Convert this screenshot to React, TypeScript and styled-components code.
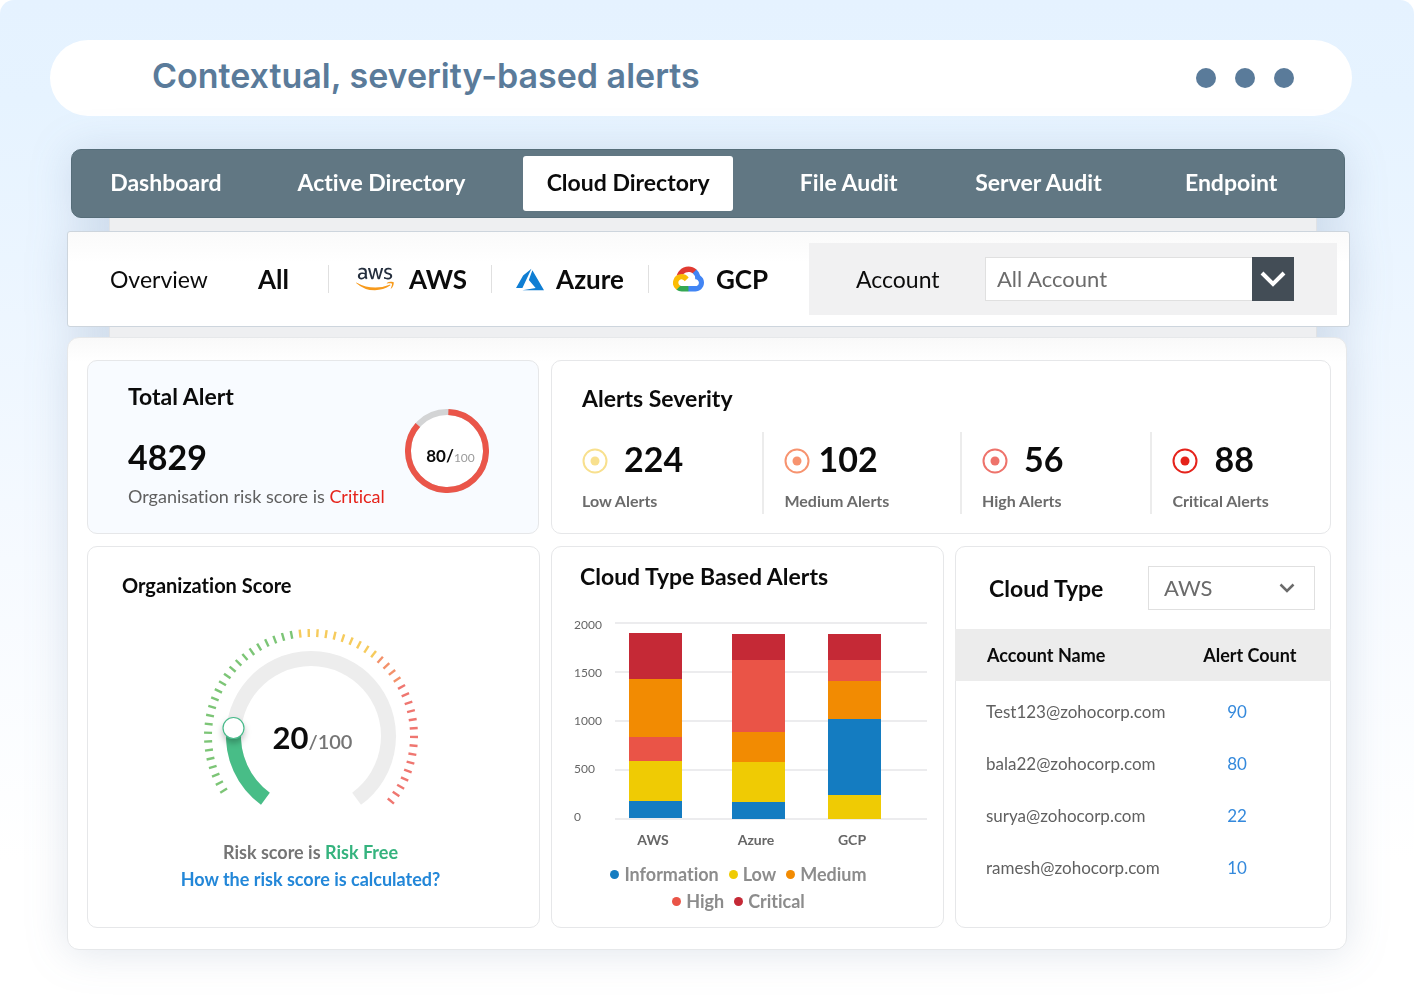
import React from "react";
import styled, { createGlobalStyle } from "styled-components";
import { FaAws } from "react-icons/fa";

const GlobalStyle = createGlobalStyle`
  *, *::before, *::after { box-sizing: border-box; }
  body {
    margin: 0;
    background: #ffffff;
    color: #0b0b0b;
    font-family: Lato, "Liberation Sans", sans-serif;
    font-variant-ligatures: none;
  }
  h1, h2, p { margin: 0; }
  button, select { font-family: inherit; font-variant-ligatures: none; }
`;

const Page = styled.main`
  padding: 40px 62px 54px 50px;
  border-radius: 14px 14px 0 0;
  background: linear-gradient(180deg, #e5f2ff 0, #e6f3ff 100px, #ebf5ff 260px, #f6faff 560px, #ffffff 860px) no-repeat;
`;

const TitleBar = styled.header`
  display: flex;
  align-items: center;
  justify-content: space-between;
  height: 76px;
  padding: 0 58px 0 102px;
  border-radius: 38px;
  background: #ffffff;
`;

const Title = styled.h1`
  padding-bottom: 4px;
  color: #5a7b9a;
  font: 600 34px/44px Inter, "Liberation Sans", sans-serif;
`;

const Dots = styled.div`
  display: flex;
  gap: 19px;
`;

const Dot = styled.span`
  width: 20px;
  height: 20px;
  border-radius: 50%;
  background: #5a7b9a;
`;

const Console = styled.div`
  margin: 33px 2px 0 17px;
  filter: drop-shadow(0 2px 20px rgba(70, 100, 145, 0.17));
`;

const Nav = styled.nav`
  display: grid;
  grid-template-columns: 188fr 244fr 250fr 192fr 188fr 198fr;
  align-items: center;
  justify-items: center;
  height: 69px;
  margin: 0 5px 0 4px;
  padding-right: 14px;
  border: 1px solid #566d79;
  border-radius: 10px;
  background: #617783;
`;

const NavTab = styled.button<{ $active?: boolean }>`
  width: calc(100% - 40px);
  height: 55px;
  padding: 0 0 3px;
  border: 0;
  border-radius: 3px;
  background: ${(p) => (p.$active ? "#ffffff" : "transparent")};
  color: ${(p) => (p.$active ? "#0b0b0b" : "#ffffff")};
  font-size: 23px;
  font-weight: 700;
  line-height: 28px;
  white-space: nowrap;
`;

const Connector = styled.div<{ $height: number }>`
  height: ${(p) => p.$height}px;
  margin: 0 33px 0 42px;
  border: solid #e0e2e5;
  border-width: 0 1px;
  background: #eeeff1;
`;

const Toolbar = styled.section`
  display: flex;
  align-items: center;
  height: 96px;
  padding: 0 12px 0 42px;
  border: 1px solid #cdd5dd;
  border-radius: 3px;
  background: linear-gradient(180deg, #fafafa 0, #ffffff 30px);
`;

const ToolbarTitle = styled.h2`
  margin-right: 26px;
  font-size: 23px;
  font-weight: 400;
  line-height: 32px;
`;

const Provider = styled.button`
  display: flex;
  align-items: center;
  gap: 12px;
  height: 32px;
  padding: 0 24px;
  border: 0;
  background: none;
  color: #0b0b0b;
  font-size: 26px;
  font-weight: 700;
  line-height: 32px;
`;

const Divider = styled.span`
  flex: none;
  width: 1px;
  height: 28px;
  background: #e0e0e0;
`;

const Spacer = styled.span`
  width: 15px;
`;

const AwsMark = styled(FaAws)`
  width: 38px;
  height: 30px;
  margin: 0 3px;
  path { fill: url(#aws-fill); }
`;

const AccountBox = styled.div`
  display: flex;
  flex: 0 1 528px;
  align-items: center;
  justify-content: space-between;
  height: 72px;
  margin-left: auto;
  padding: 0 43px 0 47px;
  background: #f1f1f2;
`;

const FieldLabel = styled.label<{ $strong?: boolean }>`
  font-size: 23px;
  font-weight: ${(p) => (p.$strong ? 700 : 400)};
  line-height: 32px;
`;

const SelectWrap = styled.div<{ $width: number }>`
  position: relative;
  width: ${(p) => p.$width}px;
`;

const Select = styled.select<{ $inset: number }>`
  display: block;
  width: 100%;
  height: 44px;
  padding: 0 44px 2px ${(p) => p.$inset}px;
  appearance: none;
  border: 1px solid #e0e0e0;
  border-radius: 0;
  background: #ffffff;
  color: #6b6b6b;
  font-size: 22px;
`;

const SelectArrow = styled.span<{ $filled?: boolean }>`
  position: absolute;
  inset: 0 0 0 auto;
  display: flex;
  align-items: center;
  justify-content: center;
  width: ${(p) => (p.$filled ? 42 : 56)}px;
  background: ${(p) => (p.$filled ? "#434d56" : "none")};
  pointer-events: none;
`;

const Panel = styled.section`
  display: flex;
  flex-direction: column;
  gap: 12px;
  margin-right: 3px;
  padding: 22px 15px 21px 19px;
  border: 1px solid #e6e8ea;
  border-radius: 12px;
  background: linear-gradient(180deg, #f9f9f9 0, #ffffff 24px);
`;

const Row = styled.div<{ $columns: string; $gap: number }>`
  display: grid;
  grid-template-columns: ${(p) => p.$columns};
  gap: ${(p) => p.$gap}px;
`;

const Card = styled.article<{ $tinted?: boolean }>`
  min-width: 0;
  border: 1px solid #e6e7e9;
  border-radius: 10px;
  background: ${(p) => (p.$tinted ? "#f8fbff" : "#ffffff")};
`;

const CardTitle = styled.h2<{ $small?: boolean }>`
  font-size: ${(p) => (p.$small ? 20 : 23)}px;
  font-weight: 700;
  line-height: 28px;
`;

const TotalCard = styled(Card)`
  display: flex;
  align-items: flex-start;
  justify-content: space-between;
  height: 174px;
  padding: 21px 49px 0 40px;
`;

const BigNumber = styled.p`
  font-size: 34px;
  font-weight: 700;
  line-height: 40px;
`;

const TotalNumber = styled(BigNumber)`
  margin-top: 27px;
`;

const Note = styled.p`
  margin-top: 7px;
  color: #5f5f5f;
  font-size: 18px;
  line-height: 24px;
`;

const Tone = styled.span<{ $color: string }>`
  color: ${(p) => p.$color};
`;

const Stacked = styled.div<{ $top: number }>`
  display: grid;
  place-items: center;
  margin-top: ${(p) => p.$top}px;
  & > * { grid-area: 1 / 1; }
`;

const RingText = styled.span`
  margin-top: 12px;
  padding-left: 7px;
  font-size: 17px;
  font-weight: 700;
  line-height: 24px;
`;

const RingTotal = styled.small`
  color: #9b9b9b;
  font-size: 12px;
  font-weight: 400;
`;

const SeverityCard = styled(Card)`
  padding: 23px 0 0;
`;

const SeverityTitle = styled(CardTitle)`
  padding-left: 30px;
`;

const SeverityList = styled.div`
  display: grid;
  grid-template-columns: 211fr 198fr 191fr 180fr;
  margin-top: 20px;
`;

const Severity = styled.div`
  height: 82px;
  padding: 7px 0 0 20px;
  border-left: 2px solid #ececec;
  &:first-child {
    padding-left: 28px;
    border-color: transparent;
  }
`;

const SeverityValue = styled.div<{ $tight?: boolean }>`
  display: flex;
  align-items: center;
  gap: ${(p) => (p.$tight ? 8 : 16)}px;
  svg { margin-top: 3px; }
`;

const SeverityLabel = styled.p`
  margin-top: 10px;
  color: #6b6b6b;
  font-size: 16px;
  font-weight: 700;
  line-height: 24px;
`;

const ScoreCard = styled(Card)`
  display: flex;
  flex-direction: column;
  align-items: center;
  height: 382px;
  padding: 24px 40px 0 34px;
`;

const ScoreTitle = styled(CardTitle)`
  align-self: flex-start;
`;

const ScoreText = styled.span`
  padding: 42px 0 0 4px;
  font-size: 31px;
  font-weight: 700;
  line-height: 36px;
`;

const ScoreTotal = styled.small`
  color: #757575;
  font-size: 20px;
  font-weight: 600;
`;

const ScoreNote = styled.p`
  margin-top: 30px;
  color: #757575;
  font-size: 18px;
  font-weight: 700;
  line-height: 28px;
`;

const HelpLink = styled.a`
  color: #2387d8;
  font-size: 18px;
  font-weight: 700;
  line-height: 26px;
  text-decoration: none;
`;

const ChartCard = styled(Card)`
  padding: 15px 16px 0 22px;
`;

const ChartTitle = styled(CardTitle)`
  padding-left: 6px;
`;

const Chart = styled.svg`
  display: block;
  width: 100%;
  height: 234px;
  margin-top: 26px;
  color: #666666;
  font-family: Lato, sans-serif;
`;

const Legend = styled.ul`
  display: flex;
  flex-wrap: wrap;
  justify-content: center;
  gap: 3px 10px;
  margin: 12px 0 0;
  padding: 0 55px 0 31px;
  list-style: none;
`;

const LegendItem = styled.li<{ $color: string }>`
  display: flex;
  align-items: center;
  gap: 5px;
  color: #8c8c8c;
  font-size: 18px;
  font-weight: 700;
  line-height: 24px;
  &::before {
    content: "";
    width: 9px;
    height: 9px;
    border-radius: 50%;
    background: ${(p) => p.$color};
  }
`;

const TypeHeader = styled.div`
  display: flex;
  align-items: center;
  justify-content: space-between;
  padding: 19px 15px 19px 33px;
`;

const AccountTable = styled.table`
  width: calc(100% + 2px);
  margin: 0 -1px;
  border-collapse: collapse;
  text-align: left;
  tbody::before {
    content: "";
    display: block;
    height: 4px;
  }
`;

const HeadCell = styled.th`
  height: 52px;
  padding: 0 0 0 32px;
  background: #ececec;
  font-size: 18px;
  font-weight: 700;
  & + & {
    width: 34%;
    padding: 0;
  }
`;

const Cell = styled.td<{ $count?: boolean }>`
  height: 52px;
  padding: 0 0 0 ${(p) => (p.$count ? 24 : 31)}px;
  color: ${(p) => (p.$count ? "#3489dc" : "#606060")};
  font-size: 17px;
`;

const tabs = ["Dashboard", "Active Directory", "Cloud Directory", "File Audit", "Server Audit", "Endpoint"];

const severities = [
  { label: "Low Alerts", value: 224, color: "#f8e08e" },
  { label: "Medium Alerts", value: 102, color: "#f7936f", tight: true },
  { label: "High Alerts", value: 56, color: "#ee736b" },
  { label: "Critical Alerts", value: 88, color: "#e5231b" },
];

const tone = { info: "#147cc1", low: "#efcb04", medium: "#f28b02", high: "#ea5447", critical: "#c52936" };

const legend = [
  ["Information", tone.info],
  ["Low", tone.low],
  ["Medium", tone.medium],
  ["High", tone.high],
  ["Critical", tone.critical],
];

// Each segment is [colour, height], listed from the top of the bar down.
const bars: { name: string; x: number; top: number; parts: [string, number][] }[] = [
  { name: "AWS", x: 55, top: 17, parts: [[tone.critical, 46], [tone.medium, 58], [tone.high, 24], [tone.low, 40], [tone.info, 17]] },
  { name: "Azure", x: 158, top: 18, parts: [[tone.critical, 26], [tone.high, 72], [tone.medium, 30], [tone.low, 40], [tone.info, 17]] },
  { name: "GCP", x: 254, top: 18, parts: [[tone.critical, 26], [tone.high, 21], [tone.medium, 38], [tone.info, 76], [tone.low, 24]] },
];

const accounts: [string, number][] = [
  ["Test123@zohocorp.com", 90],
  ["bala22@zohocorp.com", 80],
  ["surya@zohocorp.com", 22],
  ["ramesh@zohocorp.com", 10],
];

// Dark lettering above, orange smile below.
function AwsFill() {
  return (
    <linearGradient id="aws-fill" x1="0" y1="0" x2="0" y2="1">
      <stop offset="0.59" stopColor="#252f3e" />
      <stop offset="0.59" stopColor="#f79a1c" />
    </linearGradient>
  );
}

function AzureMark() {
  return (
    <svg width="28" height="23" viewBox="0 2.7 24 18.6" aria-hidden="true">
      <path
        fill="#0f7ed3"
        d="M5.483 21.3H24L14.025 4.013l-3.038 8.347 5.836 6.938L5.483 21.3zM13.23 2.7L6.105 8.677 0 19.253h5.505v.014L13.23 2.7z"
      />
      <defs>
        <AwsFill />
      </defs>
    </svg>
  );
}

function GcpMark() {
  return (
    <svg width="31" height="26" viewBox="0 0 256 206" aria-hidden="true">
      <path fill="#e13a31" d="M170.25 56.82l22.25-22.25 1.49-9.37C153.44-11.68 88.98-7.5 52.42 33.92c-10.15 11.5-17.69 25.84-21.7 40.65l7.97-1.12 44.5-7.34 3.44-3.51c19.8-21.75 53.27-24.67 76.13-6.17l7.49.39z" />
      <path fill="#4285f4" d="M224.2 73.92a100.2 100.2 0 0 0-30.21-48.72l-31.23 31.23a55.5 55.5 0 0 1 20.37 44.04v5.54a27.8 27.8 0 1 1 0 55.28h-55.67l-5.46 5.93v33.34l5.46 5.24h55.67c39.93.31 72.56-31.5 72.87-71.43a72.3 72.3 0 0 0-31.8-60.45" />
      <path fill="#34a853" d="M71.87 205.8h55.59v-44.51H71.87c-3.96 0-7.8-.85-11.4-2.5l-7.89 2.42-22.4 22.25-1.96 7.58a72 72 0 0 0 43.65 14.76" />
      <path fill="#fbbc05" d="M71.87 61.43A72.3 72.3 0 0 0 28.22 191.04l32.25-32.25a27.8 27.8 0 1 1 36.78-36.78l32.24-32.24a72 72 0 0 0-57.62-28.34" />
    </svg>
  );
}

function Target({ color }: { color: string }) {
  return (
    <svg width="26" height="26" viewBox="0 0 26 26" aria-hidden="true">
      <circle cx="13" cy="13" r="11.5" fill="none" stroke={color} strokeWidth="2" />
      <circle cx="13" cy="13" r="4.5" fill={color} />
    </svg>
  );
}

function Ring() {
  return (
    <svg width="84" height="84" viewBox="0 0 84 84" aria-hidden="true">
      <circle cx="42" cy="42" r="39" fill="#ffffff" stroke="#d3d4d5" strokeWidth="6" />
      <circle
        cx="42"
        cy="42"
        r="39"
        fill="none"
        stroke="#ea5549"
        strokeWidth="6"
        pathLength="100"
        strokeDasharray="86 14"
        transform="rotate(-88 42 42)"
      />
    </svg>
  );
}

function tickColor(i: number) {
  if (i < 24) return "#7cc576";
  if (i < 34) return "#f6cb5c";
  if (i < 38) return "#f3916a";
  return "#ef7670";
}

function Gauge() {
  return (
    <svg width="216" height="180" viewBox="-108 -108 216 180" aria-hidden="true">
      <defs>
        <filter id="knob-shadow" x="-50%" y="-50%" width="200%" height="200%">
          <feDropShadow dx="0" dy="4" stdDeviation="3" floodColor="#000000" floodOpacity="0.25" />
        </filter>
      </defs>
      {Array.from({ length: 53 }, (_, i) => (
        <line
          key={i}
          x1="99"
          x2="107"
          stroke={tickColor(i)}
          strokeWidth="2.4"
          transform={`rotate(${148 + i * 4.83})`}
        />
      ))}
      <path d="M-45.6 62.7A77.5 77.5 0 1 1 45.6 62.7" fill="none" stroke="#ededed" strokeWidth="15" />
      <path d="M-45.6 62.7A77.5 77.5 0 0 1 -77.2 -7" fill="none" stroke="#48bd87" strokeWidth="15" />
      <circle cx="-77.5" cy="-8" r="10.5" fill="#ffffff" stroke="#48b98a" strokeWidth="1.2" filter="url(#knob-shadow)" />
    </svg>
  );
}

function StackedBars() {
  return (
    <Chart viewBox="0 0 353 234" role="img" aria-label="Cloud type based alerts">
      {[2000, 1500, 1000, 500, 0].map((n, i) => (
        <g key={n}>
          <rect x="41" y={6 + i * 49} width="312" height="2" fill="#ececee" />
          <text x="0" y={13 + i * 48} fill="currentColor" fontSize="12">{n}</text>
        </g>
      ))}
      {bars.map((bar) => {
        let y = bar.top;
        return (
          <g key={bar.name}>
            {bar.parts.map(([fill, height]) => {
              const rect = <rect key={fill} x={bar.x} y={y} width="53" height={height} fill={fill} />;
              y += height;
              return rect;
            })}
            <text x={bar.x + 24} y="229" fill="currentColor" fontSize="14" fontWeight="700" textAnchor="middle">
              {bar.name}
            </text>
          </g>
        );
      })}
    </Chart>
  );
}

export default function App() {
  return (
    <>
      <GlobalStyle />
      <Page>
        <TitleBar>
          <Title>Contextual, severity-based alerts</Title>
          <Dots aria-hidden="true">
            <Dot />
            <Dot />
            <Dot />
          </Dots>
        </TitleBar>
        <Console>
          <Nav>
            {tabs.map((tab) => (
              <NavTab key={tab} type="button" $active={tab === "Cloud Directory"}>
                {tab}
              </NavTab>
            ))}
          </Nav>
          <Connector $height={13} />
          <Toolbar>
            <ToolbarTitle>Overview</ToolbarTitle>
            <Provider type="button">All</Provider>
            <Spacer />
            <Divider />
            <Provider type="button">
              <AwsMark aria-hidden="true" />
              AWS
            </Provider>
            <Divider />
            <Provider type="button">
              <AzureMark />
              Azure
            </Provider>
            <Divider />
            <Provider type="button">
              <GcpMark />
              GCP
            </Provider>
            <AccountBox>
              <FieldLabel htmlFor="account">Account</FieldLabel>
              <SelectWrap $width={309}>
                <Select id="account" $inset={11}>
                  <option>All Account</option>
                </Select>
                <SelectArrow $filled>
                  <svg width="26" height="16" viewBox="0 0 26 16" aria-hidden="true">
                    <path d="M2 2l11 11L24 2" fill="none" stroke="#ffffff" strokeWidth="4" />
                  </svg>
                </SelectArrow>
              </SelectWrap>
            </AccountBox>
          </Toolbar>
          <Connector $height={10} />
          <Panel>
            <Row $columns="452fr 780fr" $gap={12}>
              <TotalCard $tinted>
                <div>
                  <CardTitle>Total Alert</CardTitle>
                  <TotalNumber>4829</TotalNumber>
                  <Note>
                    Organisation risk score is <Tone $color="#e5231b">Critical</Tone>
                  </Note>
                </div>
                <Stacked $top={27}>
                  <Ring />
                  <RingText>
                    80/<RingTotal>100</RingTotal>
                  </RingText>
                </Stacked>
              </TotalCard>
              <SeverityCard>
                <SeverityTitle>Alerts Severity</SeverityTitle>
                <SeverityList>
                  {severities.map((s) => (
                    <Severity key={s.label}>
                      <SeverityValue $tight={s.tight}>
                        <Target color={s.color} />
                        <BigNumber>{s.value}</BigNumber>
                      </SeverityValue>
                      <SeverityLabel>{s.label}</SeverityLabel>
                    </Severity>
                  ))}
                </SeverityList>
              </SeverityCard>
            </Row>
            <Row $columns="453fr 393fr 376fr" $gap={11}>
              <ScoreCard>
                <ScoreTitle $small>Organization Score</ScoreTitle>
                <Stacked $top={29}>
                  <Gauge />
                  <ScoreText>
                    20<ScoreTotal>/100</ScoreTotal>
                  </ScoreText>
                </Stacked>
                <ScoreNote>
                  Risk score is <Tone $color="#35b37e">Risk Free</Tone>
                </ScoreNote>
                <HelpLink href="#risk-score">How the risk score is calculated?</HelpLink>
              </ScoreCard>
              <ChartCard>
                <ChartTitle>Cloud Type Based Alerts</ChartTitle>
                <StackedBars />
                <Legend>
                  {legend.map(([name, color]) => (
                    <LegendItem key={name} $color={color}>
                      {name}
                    </LegendItem>
                  ))}
                </Legend>
              </ChartCard>
              <Card>
                <TypeHeader>
                  <FieldLabel htmlFor="cloud-type" $strong>
                    Cloud Type
                  </FieldLabel>
                  <SelectWrap $width={167}>
                    <Select id="cloud-type" $inset={15}>
                      <option>AWS</option>
                    </Select>
                    <SelectArrow>
                      <svg width="16" height="10" viewBox="0 0 16 10" aria-hidden="true">
                        <path d="M1.500 1.500L8 8l6.500-6.500" fill="none" stroke="#6b6b6b" strokeWidth="2.500" />
                      </svg>
                    </SelectArrow>
                  </SelectWrap>
                </TypeHeader>
                <AccountTable>
                  <thead>
                    <tr>
                      <HeadCell scope="col">Account Name</HeadCell>
                      <HeadCell scope="col">Alert Count</HeadCell>
                    </tr>
                  </thead>
                  <tbody>
                    {accounts.map(([name, count]) => (
                      <tr key={name}>
                        <Cell>{name}</Cell>
                        <Cell $count>{count}</Cell>
                      </tr>
                    ))}
                  </tbody>
                </AccountTable>
              </Card>
            </Row>
          </Panel>
        </Console>
      </Page>
    </>
  );
}
